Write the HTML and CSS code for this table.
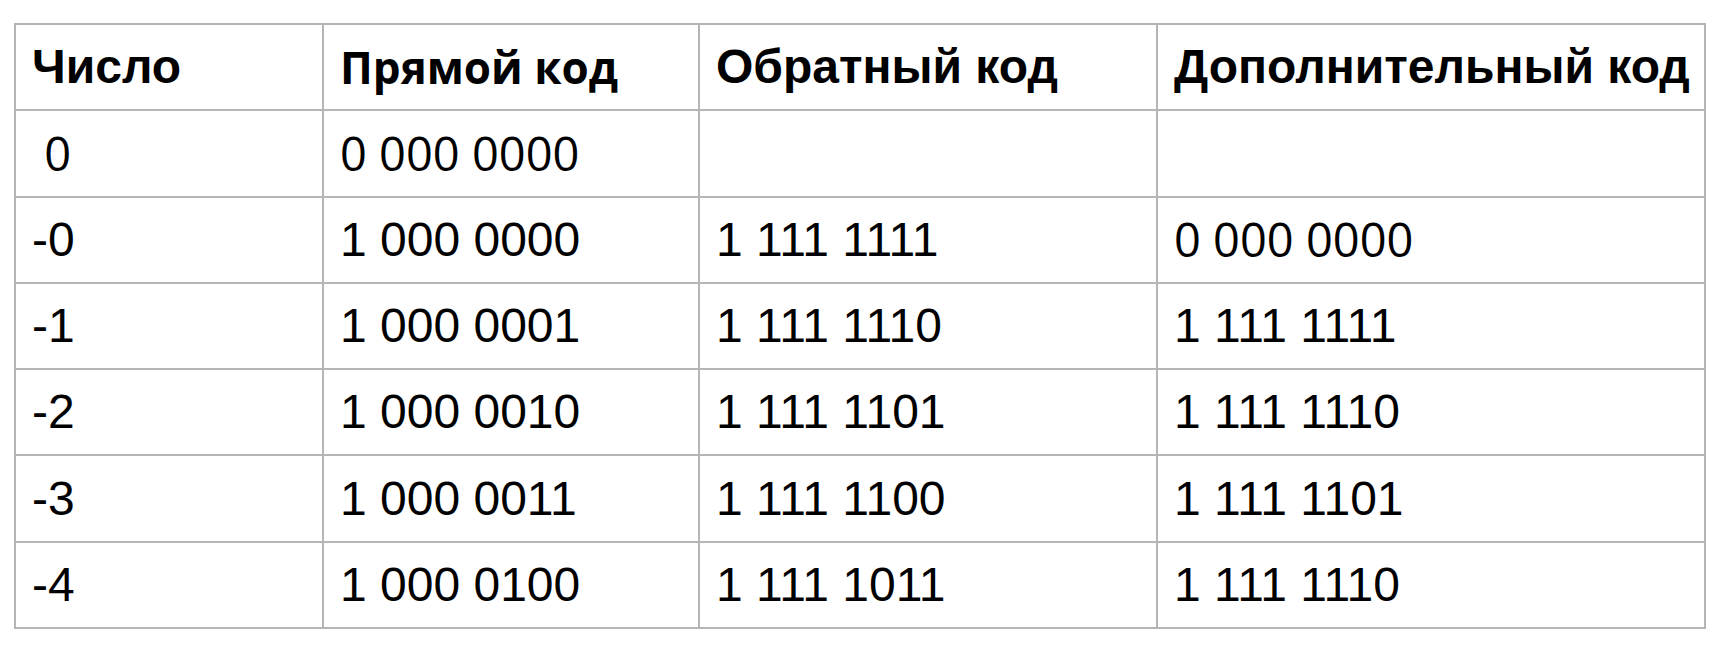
FILE: index.html
```html
<!DOCTYPE html>
<html lang="ru">
<head>
<meta charset="utf-8">
<link rel="stylesheet" href="styles.css">
</head>
<body>
<table class="codes">
  <colgroup>
    <col class="c1"><col class="c2"><col class="c3"><col class="c4">
  </colgroup>
  <thead>
    <tr>
      <th>Число</th>
      <th class="os">Прямой код</th>
      <th>Обратный код</th>
      <th>Дополнительный код</th>
    </tr>
  </thead>
  <tbody>
    <tr><td class="os pre"> 0</td><td class="os">0 000 0000</td><td></td><td></td></tr>
    <tr><td>-0</td><td>1 000 0000</td><td>1 111 1111</td><td class="os">0 000 0000</td></tr>
    <tr><td>-1</td><td>1 000 0001</td><td>1 111 1110</td><td>1 111 1111</td></tr>
    <tr><td>-2</td><td>1 000 0010</td><td>1 111 1101</td><td>1 111 1110</td></tr>
    <tr><td>-3</td><td>1 000 0011</td><td>1 111 1100</td><td>1 111 1101</td></tr>
    <tr><td>-4</td><td>1 000 0100</td><td>1 111 1011</td><td>1 111 1110</td></tr>
  </tbody>
</table>
</body>
</html>
```
FILE: styles.css
```css
html, body {
  margin: 0;
  padding: 0;
  background: #ffffff;
}
body {
  padding: 23px 0 0 14px;
  font-family: "Liberation Sans", Arial, sans-serif;
  color: #000000;
}
.codes {
  border-collapse: collapse;
  table-layout: fixed;
  width: 1692px;
}
.c1 { width: 308px; }
.c2 { width: 376px; }
.c3 { width: 458px; }
.c4 { width: 548px; }
.codes th,
.codes td {
  border: 2px solid #b5b5b5;
  height: 84.3px;
  padding: 0 0 0 16px;
  text-align: left;
  vertical-align: middle;
  font-size: 48px;
  font-weight: normal;
  white-space: nowrap;
  line-height: 1;
}
.codes th {
  font-weight: bold;
}
.codes .os {
  font-family: "Open Sans", "Noto Sans", sans-serif;
}
.codes th.os {
  font-size: 44px;
}
.codes td.os {
  font-size: 47px;
}
.codes .pre {
  white-space: pre;
}
```
